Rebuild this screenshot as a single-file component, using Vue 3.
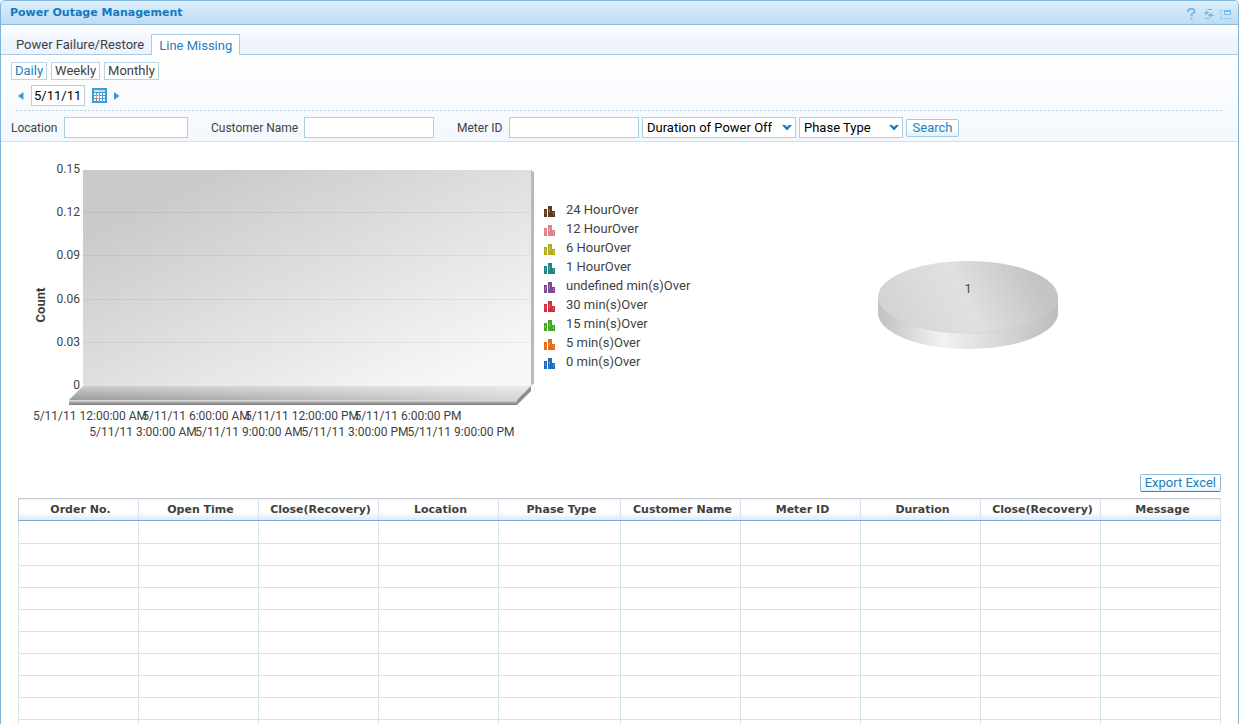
<script setup>
const gridCols = [120, 120, 120, 120, 122, 120, 120, 120, 120, 120]
const gridTotal = gridCols.reduce((a, b) => a + b, 0)
const headers = ['Order No.', 'Open Time', 'Close(Recovery)', 'Location', 'Phase Type', 'Customer Name', 'Meter ID', 'Duration', 'Close(Recovery)', 'Message']
const periods = ['Daily', 'Weekly', 'Monthly']
const legend = [
  { label: '24 HourOver', color: '#5f3a1a' },
  { label: '12 HourOver', color: '#e0808c' },
  { label: '6 HourOver', color: '#b0ae20' },
  { label: '1 HourOver', color: '#1f8585' },
  { label: 'undefined min(s)Over', color: '#7d4b8d' },
  { label: '30 min(s)Over', color: '#d22f3c' },
  { label: '15 min(s)Over', color: '#45a82e' },
  { label: '5 min(s)Over', color: '#e56a14' },
  { label: '0 min(s)Over', color: '#1c6dbb' }
]
const yTicks = [
  { label: '0.15', y: 19 }, { label: '0.12', y: 62 }, { label: '0.09', y: 105 },
  { label: '0.06', y: 149 }, { label: '0.03', y: 192 }, { label: '0', y: 235 }
]
const xTicks = [
  '5/11/11 12:00:00 AM', '5/11/11 3:00:00 AM', '5/11/11 6:00:00 AM', '5/11/11 9:00:00 AM',
  '5/11/11 12:00:00 PM', '5/11/11 3:00:00 PM', '5/11/11 6:00:00 PM', '5/11/11 9:00:00 PM'
]
const rowCount = 12
</script>

<template>
  <main class="panel">
    <header class="titlebar">
      <h1>Power Outage Management</h1>
      <div class="tools">
        <button type="button" aria-label="Help">
          <svg width="12" height="14" viewBox="0 0 12 14" fill="none" stroke="#7fb9e0" stroke-width="2"><path d="M2 5V3.500L3.500 2H7L8.500 3.500V5L5.500 7.500V9" /><path d="M5.500 10.500v2" /></svg>
        </button>
        <button type="button" aria-label="Refresh">
          <svg width="12" height="14" viewBox="0 0 12 14" fill="none" stroke="#7fb9e0" stroke-width="1"><path d="M9 2.500H5L3.500 4V6M1 5.500h5M2 6.500h3M3 7.500h1M2 11.500H6L7.500 10V7M5 8.500h5.500M6 7.500h3.500M7 6.500h1.500" /></svg>
        </button>
        <button type="button" aria-label="Maximize">
          <svg width="12" height="14" viewBox="0 0 12 14" fill="none" stroke="#7fb9e0"><path d="M.5 3v9" stroke-dasharray="1 1" /><path d="M0 11.500h12M0 3.500h4" stroke-dasharray="1 1" /><path d="M4.500 7.500v-4h6v4z" /><path d="M4 4h7" stroke-width="2" /></svg>
        </button>
      </div>
    </header>

    <nav class="tabs">
      <a href="#failure">Power Failure/Restore</a>
      <a href="#missing" class="active">Line Missing</a>
    </nav>

    <section class="filters">
      <div class="periods">
        <button v-for="(p, i) in periods" :key="p" type="button" :class="{ on: i === 0 }">{{ p }}</button>
      </div>
      <div class="dates">
        <button type="button" class="arrow" aria-label="Previous day"><svg width="6" height="8" viewBox="0 0 6 8" fill="#3a9bd0"><path d="M5.500 0v8L0 4z" /></svg></button>
        <input class="date" type="text" value="5/11/11" aria-label="Date">
        <button type="button" class="calendar" aria-label="Open calendar">
          <svg width="15" height="15" viewBox="0 0 15 15" shape-rendering="crispEdges"><path fill="#3f9dd0" d="M0 0h15v15H0z" /><path fill="#c5e2f3" d="M2 2h11v2H2z" /><path fill="#fff" d="M2 5h2v2H2zM5 5h2v2H5zM8 5h2v2H8zM11 5h2v2h-2zM2 8h2v2H2zM8 8h2v2H8zM11 8h2v2h-2zM2 11h2v2H2zM5 11h2v2H5zM8 11h2v2H8zM11 11h2v2h-2z" /><path fill="#e98a94" d="M4 7h4v4H4z" /><path fill="#fff" d="M5 8h2v2H5z" /></svg>
        </button>
        <button type="button" class="arrow" aria-label="Next day"><svg width="6" height="8" viewBox="0 0 6 8" fill="#3a9bd0"><path d="M0 0v8l5.500-4z" /></svg></button>
      </div>
      <div class="rule"></div>
      <form class="search" @submit.prevent>
        <label for="loc" class="w-loc">Location</label><input id="loc" type="text" class="in-loc">
        <label for="cust" class="w-cust">Customer Name</label><input id="cust" type="text" class="in-wide">
        <label for="meter" class="w-meter">Meter ID</label><input id="meter" type="text" class="in-wide">
        <span class="pick pick-duration">
          <select aria-label="Duration of Power Off"><option>Duration of Power Off</option></select>
          <svg width="10" height="6" viewBox="0 0 10 6" fill="#1a78b8"><path d="M0 0h3l2 2 2-2h3L5 5.500z" /></svg>
        </span>
        <span class="pick pick-phase">
          <select aria-label="Phase Type"><option>Phase Type</option></select>
          <svg width="10" height="6" viewBox="0 0 10 6" fill="#1a78b8"><path d="M0 0h3l2 2 2-2h3L5 5.500z" /></svg>
        </span>
        <button type="submit" class="go">Search</button>
      </form>
    </section>

    <section class="charts">
      <svg class="plot" width="520" height="300" viewBox="0 0 520 300">
        <defs>
          <linearGradient id="wall" x1="0" y1="0" x2="1" y2="1"><stop offset=".15" stop-color="#cacaca" /><stop offset=".9" stop-color="#f7f7f7" /></linearGradient>
          <linearGradient id="floor" x1="0" y1="0" x2="0" y2="1"><stop offset="0" stop-color="#ccc" /><stop offset="1" stop-color="#9a9a9a" /></linearGradient>
          <linearGradient id="shine" x1="0" y1="0" x2="1" y2="0"><stop offset="0" stop-color="#fff" stop-opacity="0" /><stop offset="1" stop-color="#fff" stop-opacity=".6" /></linearGradient>
          <linearGradient id="edge" x1="0" y1="0" x2="0" y2="1"><stop offset="0" stop-color="#e4e4e4" /><stop offset=".5" stop-color="#a8a8a8" /><stop offset="1" stop-color="#777" /></linearGradient>
        </defs>
        <path d="M63 20H511V236H63z" fill="url(#wall)" />
        <path v-for="t in yTicks.slice(1, 5)" :key="t.y" :d="`M63 ${t.y + 0.5}H511`" stroke="#000" stroke-opacity=".05" />
        <path d="M511 20l3 2V233l-3 3z" fill="#bababa" />
        <path d="M63 236H511L497 250H49z" fill="url(#floor)" />
        <path d="M63 236H511L497 250H49z" fill="url(#shine)" />
        <path d="M49 250H497v5H49z" fill="url(#edge)" />
        <path d="M497 250l14-14v5l-14 14z" fill="#8e8e8e" />
        <g class="axis">
          <text v-for="t in yTicks" :key="t.label" x="60" :y="t.y + 4" text-anchor="end">{{ t.label }}</text>
          <text v-for="(t, i) in xTicks" :key="t" :x="70 + i * 53" :y="i % 2 ? 286 : 270" text-anchor="middle">{{ t }}</text>
        </g>
        <text class="axis-title" transform="translate(25 155) rotate(-90)" text-anchor="middle">Count</text>
      </svg>
      <ul class="legend">
        <li v-for="l in legend" :key="l.label">
          <svg width="11" height="11" viewBox="0 0 11 11" shape-rendering="crispEdges"><path :fill="l.color" d="M0 3h3v8H0zM4 0h4v11H4zM8 5h3v6H8z" /><path fill="#fff" fill-opacity=".25" d="M1 5h1v3H1zM5 3h1v4H5zM9 6h1v3H9z" /></svg>
          <span>{{ l.label }}</span>
        </li>
      </ul>
      <div class="pie">
        <svg width="180" height="88" viewBox="0 0 180 88">
          <defs>
            <linearGradient id="top" x1="0" y1=".3" x2="1" y2=".1"><stop offset="0" stop-color="#d4d4d4" /><stop offset=".25" stop-color="#dcdcdc" /><stop offset=".42" stop-color="#e0e0e0" /><stop offset=".85" stop-color="#c4c4c4" /></linearGradient>
            <linearGradient id="side"><stop offset="0" stop-color="#c0c0c0" /><stop offset=".36" stop-color="#f2f2f2" /><stop offset="1" stop-color="#bcbcbc" /></linearGradient>
          </defs>
          <path d="M0 37v15a90 36 0 0 0 180 0V37z" fill="url(#side)" />
          <ellipse cx="90" cy="36" rx="90" ry="36" fill="url(#top)" />
          <path d="M0 36a90 36 0 0 0 180 0" fill="none" stroke="#ccc" stroke-opacity=".5" />
          <text class="axis" x="90" y="32" text-anchor="middle">1</text>
        </svg>
      </div>
    </section>

    <div class="export"><button type="button">Export Excel</button></div>

    <table class="grid">
      <colgroup><col v-for="(w, i) in gridCols" :key="i" :style="{ width: (w / gridTotal) * 100 + '%' }"></colgroup>
      <thead><tr><th v-for="(h, i) in headers" :key="i" scope="col">{{ h }}</th></tr></thead>
      <tbody><tr v-for="r in rowCount" :key="r"><td v-for="(h, i) in headers" :key="i"></td></tr></tbody>
    </table>
  </main>
</template>

<style>
body { overflow: hidden; background: #fff; }
</style>

<style scoped>
* { box-sizing: border-box; }
.panel { height: 100vh; overflow: hidden; border: 1px solid #7fb5da; border-bottom: 0; border-radius: 5px 5px 0 0; font-family: Roboto, "Liberation Sans", sans-serif; font-size: 13px; color: #3f3f3f; }
button, input, select { font: inherit; margin: 0; }
button { cursor: pointer; }
.titlebar { height: 24px; display: flex; align-items: center; justify-content: space-between; padding: 0 6px 0 9px; background: linear-gradient(#ddeefb, #bcdcf3); border-bottom: 1px solid #8db9dc; }
h1 { margin: 0; font-family: "DejaVu Sans", sans-serif; font-size: 11px; line-height: 16px; font-weight: 700; color: #1379c0; }
.tools { display: flex; gap: 5px; }
.tools button { padding: 2px 0 0; border: 0; background: none; display: flex; }
.tabs { height: 30px; display: flex; align-items: flex-end; padding-left: 7px; background: linear-gradient(#fff, #edf4fe 60%); border-bottom: 1px solid #a9cce3; }
.tabs a { height: 20px; line-height: 22px; padding: 0 7px 0 8px; color: #3f3f3f; text-decoration: none; }
.tabs .active { height: 21px; margin-bottom: -1px; padding: 0 7px; color: #2080bf; background: #fff; border: 1px solid #a9cce3; border-bottom: 0; }
.filters { padding: 7px 10px 3px; background: linear-gradient(#fff, #f3f8fe); border-bottom: 1px solid #cfe2ef; }
.periods { display: flex; gap: 4px; }
.periods button { height: 18px; padding: 0 3px; line-height: 16px; border: 1px solid #b9d5e6; background: #fff; color: #3f3f3f; }
.periods .on { color: #2080bf; }
.dates { display: flex; align-items: center; margin: 5px 0 4px 7px; gap: 7px; }
.arrow, .calendar { display: flex; padding: 0; border: 0; background: none; }
input { height: 21px; padding: 0 2px; border: 1px solid #b0d0e2; background: #fff; color: #000; }
.date { width: 54px; }
.rule { height: 1px; margin: 0 6px 0 5px; background: repeating-linear-gradient(90deg, #b4d0e2 0 2px, transparent 2px 4px); }
.search { display: flex; align-items: center; margin-top: 6px; }
.search label { flex: none; font-size: 12px; white-space: nowrap; }
.w-loc { width: 53px; }
.w-cust { width: 93px; margin-left: 23px; }
.w-meter { width: 52px; margin-left: 23px; }
.in-loc { width: 124px; }
.in-wide { width: 130px; }
.pick { position: relative; margin-left: 3px; }
.pick select { display: block; width: 100%; height: 21px; padding: 0 4px; border: 1px solid #b0d0e2; border-radius: 0; background: #fff; color: #000; appearance: none; }
.pick svg { position: absolute; right: 4px; top: 8px; pointer-events: none; }
.pick-duration { width: 154px; }
.pick-phase { width: 104px; }
.go { margin-left: 3px; width: 53px; height: 18px; padding: 0; line-height: 16px; border: 1px solid #a5cbe4; border-radius: 2px; color: #2080bf; background: linear-gradient(#fff 45%, #e3f2fb); }
.charts { display: flex; align-items: flex-start; padding-top: 8px; }
.plot { flex: none; margin-left: 19px; }
.axis, .axis text { font-size: 12px; fill: #3f3f3f; }
.axis-title { font-size: 13px; font-weight: 700; fill: #3f3f3f; }
.legend { width: 154px; margin: 50px 0 0 4px; padding: 0; list-style: none; }
.legend li { height: 19px; display: flex; align-items: center; gap: 11px; line-height: 19px; white-space: nowrap; }
.legend svg { margin-top: 4px; }
.pie { flex: 1; display: flex; justify-content: center; padding-top: 111px; }
.export { display: flex; justify-content: flex-end; padding: 24px 17px 6px; }
.export button { height: 18px; padding: 0 4px; line-height: 16px; border: 1px solid #8dbbd9; border-bottom-color: #4a7da3; border-radius: 2px; color: #2080bf; background: linear-gradient(#fff 50%, #e6f1fb); }
.grid { width: calc(100% - 34px); margin: 0 17px; border-collapse: collapse; table-layout: fixed; border: 1px solid #c6cbcf; }
th { height: 22px; padding: 0 0 0 4px; font-family: "DejaVu Sans", sans-serif; font-size: 11px; line-height: 16px; font-weight: 700; text-align: center; white-space: nowrap; background: linear-gradient(#fff 60%, #dbe9f9); border-right: 1px solid #d7e4ef; border-bottom: 1px solid #7daad0; }
td { height: 22px; padding: 0; border: 1px solid #d4e4ee; }
tbody tr:first-child td { height: 23px; border-top-color: #7daad0; }
</style>
